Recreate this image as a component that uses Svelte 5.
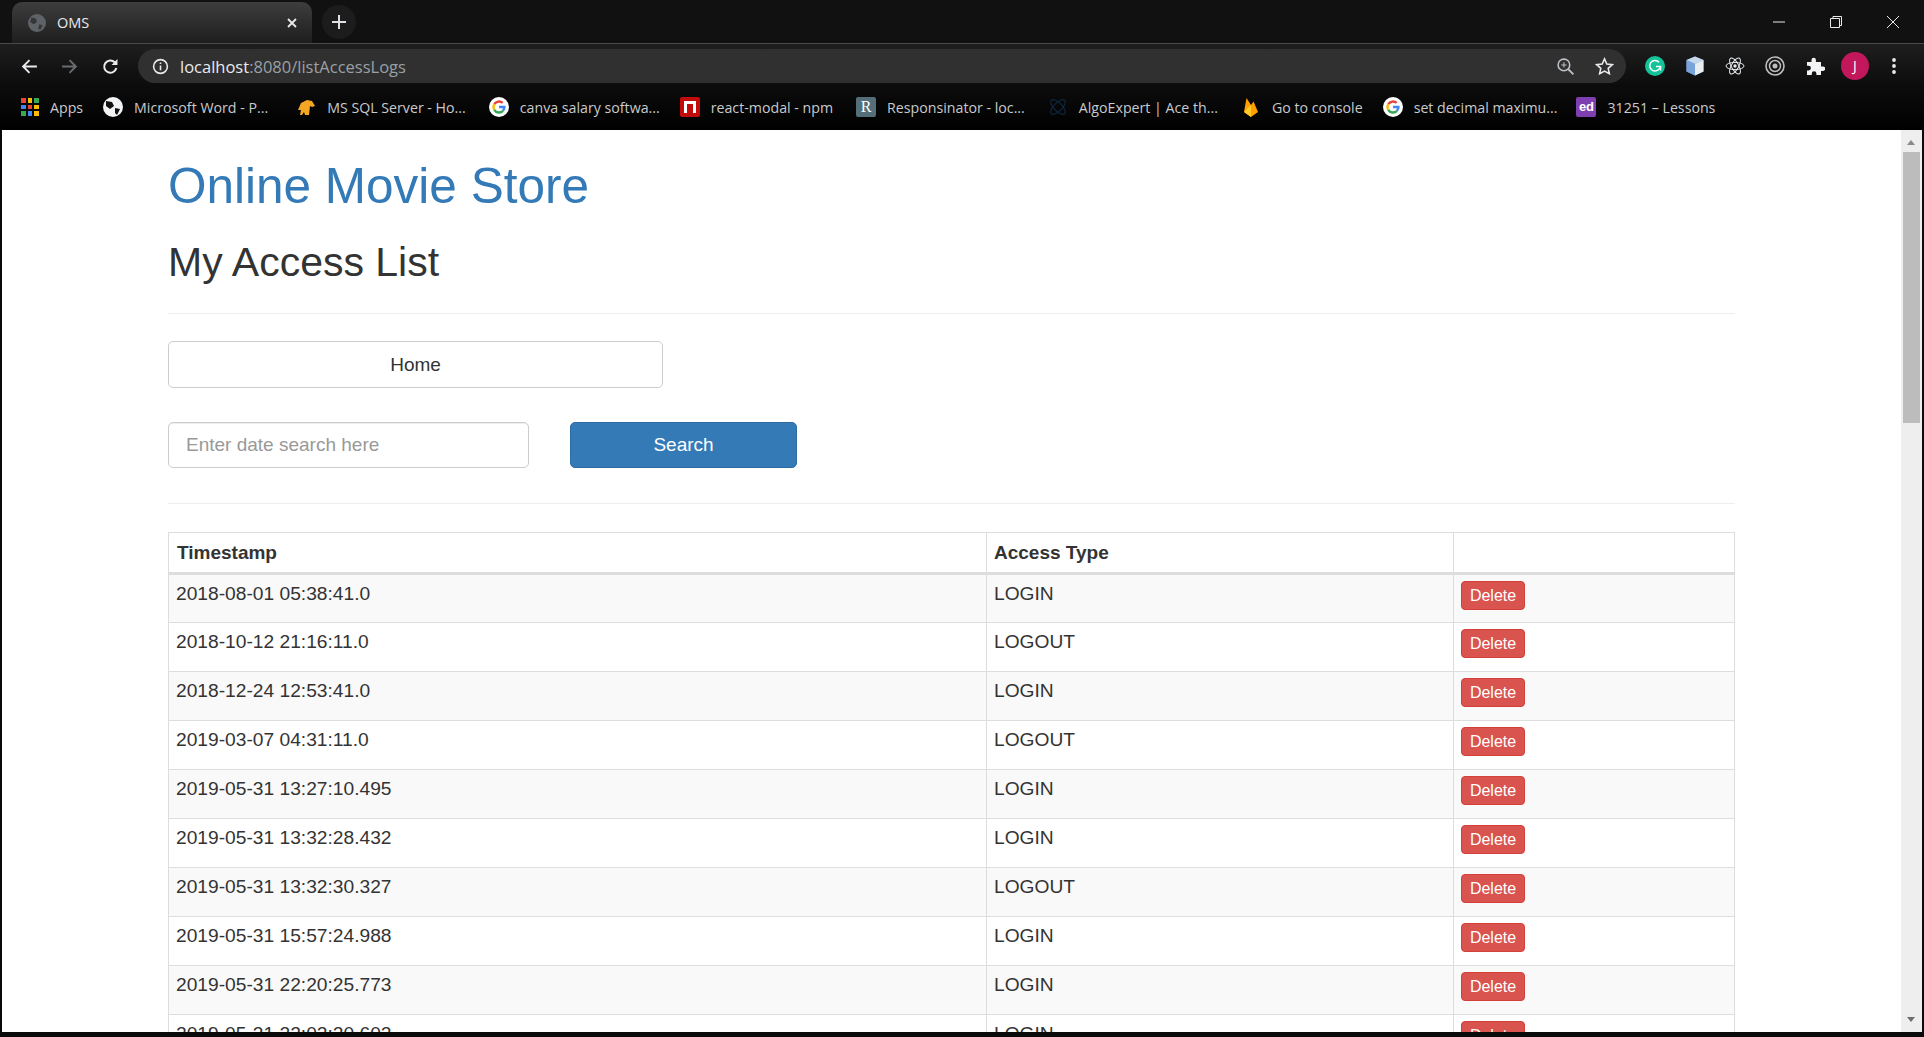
<script>
	const bookmarks = [
		{ icon: 'globe', label: 'Microsoft Word - P...', extra: 8 },
		{ icon: 'elephant', label: 'MS SQL Server - Ho...', extra: 3 },
		{ icon: 'google', label: 'canva salary softwa...', extra: 0 },
		{ icon: 'npm', label: 'react-modal - npm', extra: 3 },
		{ icon: 'resp', label: 'Responsinator - loc...', extra: 3 },
		{ icon: 'algo', label: 'AlgoExpert | Ace th...', extra: 3 },
		{ icon: 'fire', label: 'Go to console', extra: 0 },
		{ icon: 'google', label: 'set decimal maximu...', extra: -1 },
		{ icon: 'ed', label: '31251 – Lessons', extra: 0 }
	];

	const logs = [
		['2018-08-01 05:38:41.0', 'LOGIN'],
		['2018-10-12 21:16:11.0', 'LOGOUT'],
		['2018-12-24 12:53:41.0', 'LOGIN'],
		['2019-03-07 04:31:11.0', 'LOGOUT'],
		['2019-05-31 13:27:10.495', 'LOGIN'],
		['2019-05-31 13:32:28.432', 'LOGIN'],
		['2019-05-31 13:32:30.327', 'LOGOUT'],
		['2019-05-31 15:57:24.988', 'LOGIN'],
		['2019-05-31 22:20:25.773', 'LOGIN'],
		['2019-05-31 22:02:20.602', 'LOGIN']
	];

	const appColors = ['#ea4335', '#fbbc05', '#34a853', '#4285f4', '#ea4335', '#fbbc05', '#34a853', '#4285f4', '#fbbc05'];
</script>

{#snippet googleIcon()}
	<svg viewBox="0 0 20 20" class="bm-icon">
		<circle cx="10" cy="10" r="10" fill="#fff" />
		<path d="M5.300 7.200A5.500 5.500 0 0 1 13.700 5.900" fill="none" stroke="#ea4335" stroke-width="2.400" />
		<path d="M5.300 12.800a5.500 5.500 0 0 1 0-5.600" fill="none" stroke="#fbbc05" stroke-width="2.400" />
		<path d="M14 13.800a5.500 5.500 0 0 1-8.700-1" fill="none" stroke="#34a853" stroke-width="2.400" />
		<path d="M10 10h5.400a5.500 5.500 0 0 1-1.400 3.800" fill="none" stroke="#4285f4" stroke-width="2.400" />
	</svg>
{/snippet}

<div class="window">
	<div class="tabstrip">
		<div class="tab">
			<svg viewBox="0 0 16 16" class="tab-icon">
				<circle cx="8" cy="8" r="8" fill="#5f6368" />
				<path d="M3 3l4 1 1 3-3 2-3-2zM10 9l3 1-2 4-2-1z" fill="#35373a" />
			</svg>
			<span class="tab-title">OMS</span>
			<svg viewBox="0 0 12 12" class="tab-close"><path d="M2 2l8 8M10 2l-8 8" stroke="#e8eaed" stroke-width="1.800" /></svg>
		</div>
		<div class="new-tab">
			<svg viewBox="0 0 16 16"><path d="M8 1v14M1 8h14" stroke="#dfe1e5" stroke-width="2" /></svg>
		</div>
		<div class="window-controls">
			<svg viewBox="0 0 14 14"><path d="M1 7h12" stroke="#e8eaed" /></svg>
			<svg viewBox="0 0 14 14"><path d="M1.500 3.500h9v9h-9zM4 3.500V1.500h8.500v9h-2" fill="none" stroke="#e8eaed" /></svg>
			<svg viewBox="0 0 14 14"><path d="M1 1l12 12M13 1L1 13" stroke="#e8eaed" /></svg>
		</div>
	</div>

	<div class="toolbar">
		<svg viewBox="0 0 16 16" class="nav"><path d="M15 8H2M8 2L2 8l6 6" fill="none" stroke="#e8eaed" stroke-width="1.800" /></svg>
		<svg viewBox="0 0 16 16" class="nav"><path d="M1 8h13M8 2l6 6-6 6" fill="none" stroke="#6b6d70" stroke-width="1.800" /></svg>
		<svg viewBox="0 0 16 16" class="nav"><path d="M13.500 9.500A5.800 5.800 0 1 1 12 4" fill="none" stroke="#e8eaed" stroke-width="1.900" /><path d="M14.500 1v5.500H9z" fill="#e8eaed" /></svg>
		<div class="omnibox">
			<svg viewBox="0 0 16 16" class="info">
				<circle cx="8" cy="8" r="6.500" fill="none" stroke="#e8eaed" stroke-width="1.500" />
				<path d="M8 7v4.500M8 4.200v1.500" stroke="#e8eaed" stroke-width="1.500" />
			</svg>
			<span class="url"><b>localhost</b>:8080/listAccessLogs</span>
			<svg viewBox="0 0 18 18" class="omni-icon">
				<circle cx="7.500" cy="7.500" r="5.500" fill="none" stroke="#bdc1c6" stroke-width="1.500" />
				<path d="M11.500 11.500l5 5" stroke="#bdc1c6" stroke-width="1.800" />
				<path d="M7.500 5v5M5 7.500h5" stroke="#bdc1c6" />
			</svg>
			<svg viewBox="0 0 18 18" class="omni-icon star">
				<path d="M9 1.800l2.200 4.800 5.200.6-3.900 3.500 1.100 5.200L9 13.300l-4.600 2.600 1.100-5.200-3.900-3.500 5.200-.6z" fill="none" stroke="#e8eaed" stroke-width="1.500" />
			</svg>
		</div>
		<div class="extensions">
			<svg viewBox="0 0 20 20" class="ext-svg">
				<circle cx="10" cy="10" r="10" fill="#15c39a" />
				<path d="M14 6.200A5.300 5.300 0 1 0 15 11.500" fill="none" stroke="#fff" stroke-width="1.500" />
				<path d="M11 10.500h4.500v4" fill="none" stroke="#fff" stroke-width="1.500" />
			</svg>
			<svg viewBox="0 0 20 20" class="ext-svg">
				<path d="M10 0.500l8.500 3.500v11.500L10 19.500l-8.500-4V4z" fill="#6f9bd6" />
				<path d="M10 0.500l8.500 3.500L10 8 1.500 4z" fill="#c6d7ea" />
				<path d="M10 8l8.500-4v11.500L10 19.500z" fill="#e8eef0" />
				<path d="M1.500 4L10 8v11.500l-8.500-4z" fill="#7aa3dc" />
			</svg>
			<svg viewBox="0 0 20 20" class="ext-svg">
				<g fill="none" stroke="#e8eaed" stroke-width="1">
					<ellipse cx="10" cy="10" rx="9" ry="3.600" />
					<ellipse cx="10" cy="10" rx="9" ry="3.600" transform="rotate(60 10 10)" />
					<ellipse cx="10" cy="10" rx="9" ry="3.600" transform="rotate(120 10 10)" />
				</g>
				<circle cx="10" cy="10" r="1.700" fill="#e8eaed" />
			</svg>
			<svg viewBox="0 0 20 20" class="ext-svg">
				<g fill="none" stroke="#bdbdbd">
					<circle cx="10" cy="10" r="9" stroke-width="1.600" />
					<circle cx="10" cy="10" r="5.500" stroke-width="1.500" />
				</g>
				<circle cx="10" cy="10" r="2.500" fill="#bdbdbd" />
			</svg>
			<svg viewBox="0 0 20 20" class="ext-svg">
				<path d="M2 6h4.500V4a2.200 2.200 0 0 1 4.400 0v2h5.100v4.500h2a2.200 2.200 0 0 1 0 4.400h-2V19h-4.600v-1.500a2.300 2.300 0 0 0-4.600 0V19H2v-4.500h1.500a2.400 2.400 0 0 0 0-4.800H2z" fill="#f1f3f4" />
			</svg>
			<div class="avatar">J</div>
			<svg viewBox="0 0 6 20" class="dots">
				<circle cx="3" cy="4" r="1.900" fill="#e8eaed" />
				<circle cx="3" cy="10" r="1.900" fill="#e8eaed" />
				<circle cx="3" cy="16" r="1.900" fill="#e8eaed" />
			</svg>
		</div>
	</div>

	<div class="bookmarks">
		<div class="bm">
			<div class="apps">
				{#each appColors as c}
					<i style="background: {c}"></i>
				{/each}
			</div>
			<span>Apps</span>
		</div>
		{#each bookmarks as b}
			<div class="bm" style="margin-right: {b.extra}px">
				{#if b.icon === 'globe'}
					<svg viewBox="0 0 20 20" class="bm-icon">
						<circle cx="10" cy="10" r="10" fill="#f1f3f4" />
						<path d="M3 4l6 1 2 4-4 3-4-3zM12 11l5 1-3 6-2-2z" fill="#111" />
					</svg>
				{:else if b.icon === 'elephant'}
					<svg viewBox="0 0 20 20" class="bm-icon">
						<path d="M2 13l3-7 6-3 5 1 3 5-3 1-2-1-1 9H9l-1-3-2 3H4l1-5z" fill="#f5a623" />
					</svg>
				{:else if b.icon === 'google'}
					{@render googleIcon()}
				{:else if b.icon === 'npm'}
					<div class="bm-box npm"><i></i></div>
				{:else if b.icon === 'resp'}
					<div class="bm-box resp">R</div>
				{:else if b.icon === 'algo'}
					<svg viewBox="0 0 20 20" class="bm-icon">
						<g fill="none" stroke="#10263f" stroke-width="1.200">
							<ellipse cx="10" cy="10" rx="9.500" ry="4" transform="rotate(45 10 10)" />
							<ellipse cx="10" cy="10" rx="9.500" ry="4" transform="rotate(135 10 10)" />
						</g>
					</svg>
				{:else if b.icon === 'fire'}
					<svg viewBox="0 0 20 20" class="bm-icon">
						<path d="M3 15L5.500 1l4.500 7 2.500-3.500L17 15l-7 5z" fill="#ffa000" />
						<path d="M10 8l-7 7 7 5z" fill="#ffca28" />
					</svg>
				{:else if b.icon === 'ed'}
					<div class="bm-box ed">ed</div>
				{/if}
				<span>{b.label}</span>
			</div>
		{/each}
	</div>

	<div class="viewport">
		<div class="page">
			<div class="container">
				<h1><a href="#top">Online Movie Store</a></h1>
				<h2>My Access List</h2>
				<hr class="rule-top" />
				<button class="btn-home">Home</button>
				<form class="search" onsubmit={(e) => e.preventDefault()}>
					<input type="text" placeholder="Enter date search here" />
					<button class="btn-search">Search</button>
				</form>
				<hr class="rule-bottom" />
				<table>
					<colgroup>
						<col class="col-time" />
						<col class="col-type" />
						<col />
					</colgroup>
					<thead>
						<tr>
							<th>Timestamp</th>
							<th>Access Type</th>
							<th></th>
						</tr>
					</thead>
					<tbody>
						{#each logs as [stamp, type]}
							<tr>
								<td>{stamp}</td>
								<td>{type}</td>
								<td><button class="btn-delete">Delete</button></td>
							</tr>
						{/each}
					</tbody>
				</table>
			</div>
		</div>
		<div class="scrollbar">
			<span class="arrow up"></span>
			<div class="track"><div class="thumb"></div></div>
			<span class="arrow down"></span>
		</div>
	</div>
</div>

<style>
	:global(body) {
		margin: 0;
		background: #000;
		overflow: hidden;
	}

	.window {
		height: 1037px;
		display: flex;
		flex-direction: column;
		overflow: hidden;
		background: #0a0a0a;
		font-family: "Open Sans", "Liberation Sans", sans-serif;
	}

	.tabstrip {
		height: 44px;
		flex: none;
		display: flex;
		align-items: flex-end;
		padding-left: 12px;
		background: #111;
		border-bottom: 1px solid #4a4a4a;
		box-sizing: border-box;
	}

	.tab {
		width: 300px;
		height: 41px;
		box-sizing: border-box;
		display: flex;
		align-items: center;
		padding: 0 14px 0 16px;
		border-radius: 10px 10px 0 0;
		background: linear-gradient(#3d3d3d, #1e1e1e);
		color: #e8eaed;
		font-size: 14.500px;
	}

	.tab-icon {
		width: 18px;
		height: 18px;
		margin-right: 11px;
	}

	.tab-title {
		flex: 1;
	}

	.tab-close {
		width: 12px;
		height: 12px;
	}

	.new-tab {
		width: 34px;
		height: 34px;
		margin: 0 0 4px 10px;
		border-radius: 50%;
		background: #1c1c1c;
		display: flex;
		align-items: center;
		justify-content: center;
	}

	.new-tab svg {
		width: 16px;
		height: 16px;
	}

	.window-controls {
		margin-left: auto;
		align-self: center;
		display: flex;
		gap: 43px;
		padding-right: 24px;
	}

	.window-controls svg {
		width: 14px;
		height: 14px;
		display: block;
	}

	.toolbar {
		height: 42px;
		flex: none;
		display: flex;
		align-items: center;
		padding-left: 21px;
		background: linear-gradient(#1e1e1e, #0c0c0c);
	}

	.nav {
		width: 17px;
		height: 17px;
		margin: 2px 23px 0 0;
		flex: none;
	}

	.nav:nth-child(2) {
		margin-right: 24px;
	}

	.nav:nth-child(3) {
		margin-right: 19px;
	}

	.omnibox {
		width: 1488px;
		height: 34px;
		margin-top: 2px;
		box-sizing: border-box;
		display: flex;
		align-items: center;
		padding: 0 12px 0 14px;
		border-radius: 17px;
		background: #303030;
		flex: none;
	}

	.info {
		width: 17px;
		height: 17px;
		margin-right: 11px;
	}

	.url {
		flex: 1;
		font-size: 16.500px;
		color: #9aa0a6;
	}

	.url b {
		font-weight: 400;
		color: #e8eaed;
	}

	.omni-icon {
		width: 19px;
		height: 19px;
		margin-left: 20px;
	}

	.extensions {
		flex: 1;
		display: flex;
		align-items: center;
		margin-top: 2px;
		padding-left: 19px;
		gap: 20px;
	}

	.ext-svg {
		width: 20px;
		height: 20px;
		flex: none;
	}

	.avatar {
		width: 28px;
		height: 28px;
		margin: 0 -4px;
		border-radius: 50%;
		background: #c2185b;
		color: #fff;
		font-size: 14px;
		line-height: 28px;
		text-align: center;
		flex: none;
	}

	.dots {
		width: 6px;
		height: 20px;
		margin-left: 6px;
		flex: none;
	}

	.bookmarks {
		height: 44px;
		flex: none;
		box-sizing: border-box;
		display: flex;
		align-items: center;
		padding: 0 0 2px 21px;
		gap: 20px;
		background: linear-gradient(#0c0c0c, #000);
		color: #c8cacc;
		font-size: 14.200px;
	}

	.bm {
		display: flex;
		align-items: center;
		gap: 11px;
		white-space: nowrap;
	}

	.apps {
		width: 18px;
		height: 18px;
		display: grid;
		grid-template-columns: repeat(3, 1fr);
		gap: 2px;
	}

	.apps i {
		display: block;
	}

	.bm-icon {
		width: 20px;
		height: 20px;
		flex: none;
	}

	.bm-box {
		width: 20px;
		height: 20px;
		border-radius: 2px;
		flex: none;
		box-sizing: border-box;
		text-align: center;
		line-height: 20px;
		color: #fff;
	}

	.npm {
		background: #c40b0b;
		padding: 4px 4px 0;
	}

	.npm i {
		display: block;
		height: 12px;
		border: 3px solid #fff;
		border-bottom: none;
		box-sizing: border-box;
	}

	.resp {
		background: #546e7a;
		font-family: "Liberation Serif", serif;
		font-size: 16px;
	}

	.ed {
		background: #7e3fb0;
		font-family: "Liberation Sans", sans-serif;
		font-weight: 700;
		font-size: 13px;
	}

	.viewport {
		flex: 1;
		min-height: 0;
		display: flex;
		margin: 0 2px 5px 2px;
		background: #fff;
		overflow: hidden;
	}

	.page {
		flex: 1;
		min-width: 0;
		overflow: hidden;
		padding-left: 166px;
		font-family: "Liberation Sans", Arial, sans-serif;
		font-size: 19px;
		line-height: 27px;
		color: #333;
	}

	.container {
		width: 1567px;
	}

	h1 {
		margin: 0;
		padding-top: 29px;
		font-size: 49.500px;
		line-height: 54px;
		font-weight: 400;
	}

	h1 a {
		color: #337ab7;
		text-decoration: none;
	}

	h2 {
		margin: 27px 0 0;
		font-size: 41px;
		line-height: 45px;
		font-weight: 400;
	}

	hr {
		margin: 0;
		border: none;
		border-top: 1px solid #eee;
	}

	.rule-top {
		margin: 28px 0 27px;
	}

	.rule-bottom {
		margin: 35px 0 28px;
	}

	button {
		font-family: inherit;
		cursor: pointer;
	}

	.btn-home {
		display: block;
		width: 495px;
		height: 47px;
		padding: 0;
		background: #fff;
		border: 1px solid #ccc;
		border-radius: 5px;
		color: #333;
		font-size: 19px;
	}

	.search {
		display: flex;
		margin-top: 34px;
		gap: 41px;
	}

	input {
		width: 361px;
		height: 46px;
		box-sizing: border-box;
		padding: 0 17px;
		border: 1px solid #ccc;
		border-radius: 5px;
		font-family: inherit;
		font-size: 19px;
		color: #555;
		box-shadow: inset 0 1px 1px rgba(0, 0, 0, 0.075);
	}

	input::placeholder {
		color: #999;
	}

	.btn-search {
		width: 227px;
		height: 46px;
		padding: 0;
		background: #337ab7;
		border: 1px solid #2e6da4;
		border-radius: 5px;
		color: #fff;
		font-size: 19px;
	}

	table {
		width: 100%;
		table-layout: fixed;
		border-collapse: collapse;
		border: 1px solid #ddd;
	}

	.col-time {
		width: 818px;
	}

	.col-type {
		width: 467px;
	}

	th,
	td {
		border: 1px solid #ddd;
		text-align: left;
		vertical-align: top;
	}

	th {
		height: 41px;
		box-sizing: border-box;
		font-weight: 700;
		border-bottom-width: 3px;
		padding: 6px 8px 0;
	}

	th:nth-child(2) {
		padding-left: 7px;
	}

	td {
		height: 49px;
		box-sizing: border-box;
		padding: 5px 7px 0;
		font-size: 19.200px;
	}

	tbody tr:nth-child(odd) {
		background: #f9f9f9;
	}

	.btn-delete {
		display: block;
		width: 64px;
		height: 29px;
		margin-top: 1px;
		padding: 0;
		background: #d9534f;
		border: 1px solid #d43f3a;
		border-radius: 4px;
		color: #fff;
		font-size: 16px;
		line-height: 22px;
	}

	.scrollbar {
		width: 21px;
		flex: none;
		display: flex;
		flex-direction: column;
		background: #eee;
	}

	.arrow {
		height: 22px;
		flex: none;
		position: relative;
	}

	.arrow::after {
		content: '';
		position: absolute;
		left: 6px;
		border-left: 4.500px solid transparent;
		border-right: 4.500px solid transparent;
	}

	.arrow.up::after {
		top: 10px;
		border-bottom: 5px solid #8a8a8a;
	}

	.arrow.down::after {
		top: 7px;
		border-top: 5px solid #6d6d6d;
	}

	.track {
		flex: 1;
	}

	.thumb {
		height: 271px;
		margin: 0 2px;
		background: #bcbcbc;
	}
</style>
